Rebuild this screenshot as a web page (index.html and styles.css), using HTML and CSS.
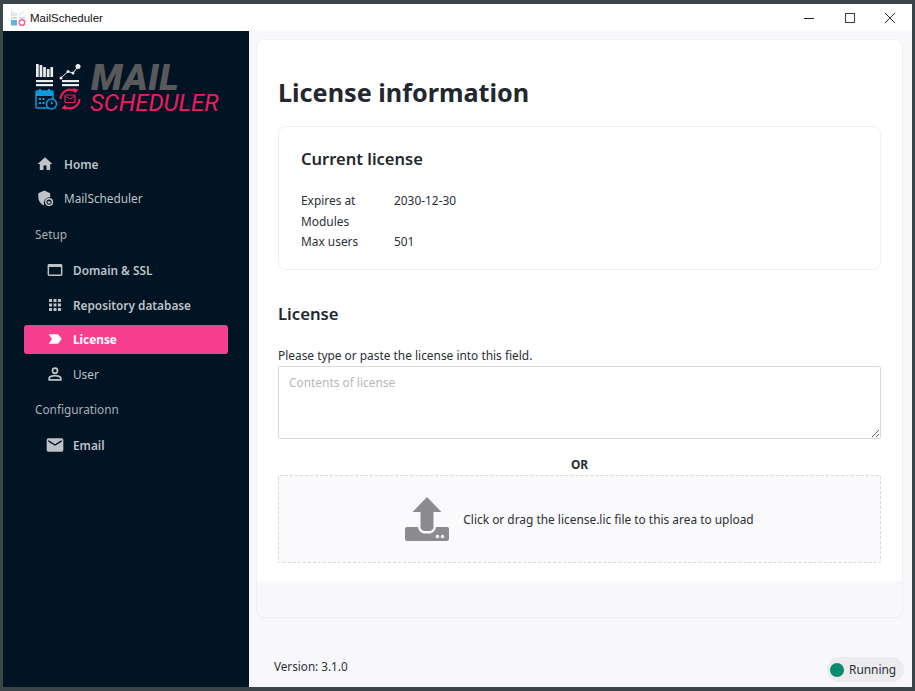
FILE: index.html
```html
<!DOCTYPE html>
<html lang="en">
<head>
<meta charset="utf-8">
<title>MailScheduler</title>
<link rel="stylesheet" href="styles.css">
</head>
<body>
<div class="window">
  <header class="titlebar">
    <svg class="app-icon" width="16" height="16" viewBox="0 0 16 16">
      <rect x="1" y="1" width="1.500" height="5" fill="#d5dbe0"/><rect x="3.200" y="2" width="1.500" height="4" fill="#d5dbe0"/><rect x="5.400" y="3" width="1.500" height="3" fill="#d5dbe0"/>
      <path d="M9 5l3-1.500 2.500-2.500" fill="none" stroke="#d5dbe0"/>
      <rect x="1" y="7" width="6" height="2" fill="#d5dbe0"/><rect x="9" y="7" width="6" height="2" fill="#d5dbe0"/>
      <rect x="1" y="10" width="6" height="5.500" fill="#5cb3e0"/>
      <circle cx="12" cy="12.500" r="2.800" fill="none" stroke="#f0668f" stroke-width="1.500"/>
    </svg>
    <span class="app-name">MailScheduler</span>
    <div class="win-controls">
      <svg class="win-btn" width="14" height="14" viewBox="0 0 14 14"><path d="M2 7.500h10" stroke="#222" fill="none"/></svg>
      <svg class="win-btn" width="14" height="14" viewBox="0 0 14 14"><rect x="2.500" y="2.500" width="9" height="9" stroke="#444" stroke-width="1.100" fill="none"/></svg>
      <svg class="win-btn" width="14" height="14" viewBox="0 0 14 14"><path d="M2 2l10 10M12 2L2 12" stroke="#333" fill="none"/></svg>
    </div>
  </header>
  <div class="app">
    <aside class="sidebar">
      <div class="logo">
        <svg class="logo-icons" width="46" height="46" viewBox="0 0 46 46">
          <g fill="#e9edf0">
            <rect x="1" y="0" width="2.700" height="13"/><rect x="4.600" y="1" width="2.700" height="12"/><rect x="8.200" y="3" width="2.700" height="10"/><rect x="11.800" y="5" width="2.700" height="8"/><rect x="15.400" y="3" width="2.700" height="10"/>
            <rect x="1" y="16" width="17" height="2.200"/><rect x="1" y="20" width="17" height="2.200"/>
            <rect x="27" y="16" width="17" height="2.200"/><rect x="27" y="20" width="17" height="2.200"/>
            <circle cx="26" cy="14" r="1.500"/><circle cx="33" cy="7.500" r="1.500"/><circle cx="38" cy="9" r="1.500"/><circle cx="43" cy="2.500" r="2.500"/>
          </g>
          <path d="M26 14l7-6.500 5 1.500 5-6.500" stroke="#e9edf0" fill="none"/>
          <g fill="none" stroke="#0d9be0" stroke-width="1.500">
            <rect x="1" y="27" width="17" height="17" rx="1"/>
          </g>
          <rect x="1" y="27" width="17" height="5" fill="#0d9be0"/>
          <rect x="4" y="25" width="2" height="3" fill="#0d9be0"/><rect x="13" y="25" width="2" height="3" fill="#0d9be0"/>
          <g fill="#0d9be0"><rect x="4" y="34" width="2" height="2"/><rect x="7.500" y="34" width="2" height="2"/><rect x="4" y="38" width="2" height="2"/><rect x="7.500" y="38" width="2" height="2"/></g>
          <circle cx="16.500" cy="40" r="5" fill="#001424" stroke="#0d9be0" stroke-width="1.500"/>
          <path d="M16.500 37.500V40l1.800-1" fill="none" stroke="#0d9be0"/>
          <g fill="none" stroke="#ed1f5f" stroke-width="2">
            <path d="M25.500 35a9.500 9.500 0 0 1 15-7.500"/><path d="M44.500 35a9.500 9.500 0 0 1-15 7.500"/>
            <rect x="30" y="31" width="10" height="7.500" rx="1" stroke-width="1.200"/><path d="M30.500 32l4.500 3 4.500-3" stroke-width="1"/>
          </g>
          <path d="M38 24l5.500 1.500-3.500 4zM32 46l-5.500-1.500 3.500-4z" fill="#ed1f5f"/>
        </svg>
        <div class="logo-text">
          <div class="logo-mail">MAIL</div>
          <div class="logo-sched">SCHEDULER</div>
        </div>
      </div>
      <nav class="nav">
        <a class="nav-item"><svg class="ic" width="20" height="20" viewBox="-1.500 -1.500 27 27"><path d="M10 20v-6h4v6h5v-8h3L12 3 2 12h3v8z"/></svg>Home</a>
        <a class="nav-item plain"><svg class="ic" width="20" height="20" viewBox="-1.500 -1.500 27 27"><path d="M11 2l8 3.500v5.500a8 8 0 0 0-8 11C6.500 20.500 3 16 3 11V5.500z"/><circle cx="17.500" cy="17.500" r="4.500" fill="none" stroke="#bfc3c7" stroke-width="2"/><rect x="15.500" y="16.500" width="4" height="3"/></svg>MailScheduler</a>
        <div class="nav-label">Setup</div>
        <a class="nav-item sub"><svg class="ic" width="20" height="20" viewBox="-1.500 -1.500 27 27"><path d="M20 4H4a2 2 0 0 0-2 2v12a2 2 0 0 0 2 2h16a2 2 0 0 0 2-2V6a2 2 0 0 0-2-2zm0 14H4V8h16z"/></svg>Domain &amp; SSL</a>
        <a class="nav-item sub"><svg class="ic" width="20" height="20" viewBox="-1.500 -1.500 27 27"><path d="M4 8h4V4H4zm6 12h4v-4h-4zm-6 0h4v-4H4zm0-6h4v-4H4zm6 0h4v-4h-4zm6-10v4h4V4zm-6 4h4V4h-4zm6 6h4v-4h-4zm0 6h4v-4h-4z"/></svg>Repository database</a>
        <a class="nav-item sub active"><svg class="ic" width="20" height="20" viewBox="-1.500 -1.500 27 27"><path d="M3.500 18.500L8 12 3.500 5.500H15c.7 0 1.300.3 1.700.9L21 12l-4.300 5.600c-.4.600-1 .9-1.700.9z"/></svg>License</a>
        <a class="nav-item sub plain"><svg class="ic" width="20" height="20" viewBox="0 0 24 24"><path d="M12 6a2 2 0 1 1 0 4 2 2 0 0 1 0-4m0 9c2.700 0 5.800 1.300 6 2v1H6v-1c.2-.7 3.300-2 6-2M12 4a4 4 0 1 0 0 8 4 4 0 0 0 0-8zm0 9c-2.700 0-8 1.300-8 4v3h16v-3c0-2.700-5.300-4-8-4z"/></svg>User</a>
        <div class="nav-label">Configurationn</div>
        <a class="nav-item sub"><svg class="ic" width="20" height="20" viewBox="0 0 24 24"><path d="M20 4H4a2 2 0 0 0-2 2v12a2 2 0 0 0 2 2h16a2 2 0 0 0 2-2V6a2 2 0 0 0-2-2zm0 4l-8 5-8-5V6l8 5 8-5z"/></svg>Email</a>
      </nav>
    </aside>
    <main class="main">
      <section class="card">
        <div class="card-body">
          <h1 class="title">License information</h1>
          <div class="info-card">
            <h2 class="info-title">Current license</h2>
            <dl class="info-grid">
              <dt>Expires at</dt><dd>2030-12-30</dd>
              <dt>Modules</dt><dd></dd>
              <dt>Max users</dt><dd>501</dd>
            </dl>
          </div>
          <h2 class="section-title">License</h2>
          <label class="field-label" for="lic">Please type or paste the license into this field.</label>
          <textarea class="field" id="lic" placeholder="Contents of license"></textarea>
          <div class="or">OR</div>
          <div class="drop">
            <svg class="drop-icon" width="44" height="44" viewBox="0 0 44 44"><path fill="#8c8c8e" d="M22 0L36.500 15H28.500V31a5 5 0 0 1-5 3H20.500a5 5 0 0 1-5-3V15H7.500z"/><path fill="#8c8c8e" d="M2 30H13c.5 4 3.500 6.500 7 6.500h4c3.500 0 6.500-2.500 7-6.500H42a2 2 0 0 1 2 2v10a2 2 0 0 1-2 2H2a2 2 0 0 1-2-2V32a2 2 0 0 1 2-2z"/><circle cx="32.500" cy="39.500" r="1.700" fill="#fff"/><circle cx="37.500" cy="39.500" r="1.700" fill="#fff"/></svg>
            <span>Click or drag the license.lic file to this area to upload</span>
          </div>
        </div>
        <div class="card-foot"></div>
      </section>
      <footer class="status-bar">
        <span class="version">Version: 3.1.0</span>
        <span class="status"><i class="dot"></i>Running</span>
      </footer>
    </main>
  </div>
</div>
</body>
</html>
```
FILE: styles.css
```css
* { box-sizing: border-box; }
html, body { margin: 0; height: 100%; }
body {
  background: #3b4648;
  padding: 4px 3px;
  font-family: "Noto Sans", sans-serif;
  font-size: 11.9px;
  color: #2a2f36;
  overflow: hidden;
}
.window { height: 683px; display: flex; flex-direction: column; background: #fff; }
.titlebar { height: 27px; flex: none; display: flex; align-items: center; padding-left: 7px; background: #fff; }
.app-icon { margin-right: 4px; }
.app-name { font-family: "Liberation Sans", sans-serif; font-size: 11.5px; color: #111; }
.win-controls { margin-left: auto; display: flex; gap: 26.5px; padding-right: 15px; }
.win-btn { display: block; }
.app { flex: 1; min-height: 0; display: flex; }
.sidebar { width: 246px; flex: none; background: #001424; padding: 32px 21px 0; }
.logo { display: flex; align-items: flex-start; height: 56px; padding-left: 11px; }
.logo-icons { flex: none; margin-right: 10px; margin-top: 1px; }
.logo-text { font-family: "Roboto", sans-serif; font-style: italic; }
.logo-mail { font-weight: 900; font-size: 37px; line-height: 30px; color: #59595c; letter-spacing: .4px; }
.logo-sched { font-weight: 400; font-size: 24px; line-height: 19px; color: #ee1c5f; letter-spacing: -.1px; margin: 1px 0 0 -1px; }
.nav { display: flex; flex-direction: column; margin-top: 30px; }
.nav-item { height: 29px; margin-bottom: 5px; display: flex; align-items: center; gap: 9px; padding-left: 11px; border-radius: 3px; font-size: 11.8px; font-weight: 600; color: #bfc3c7; }
.nav-item.plain { font-weight: 400; }
.nav-item.sub { padding-left: 21px; gap: 8px; margin-bottom: 5.5px; }
.nav-item.sub:has(+ .nav-label) { margin-bottom: 4px; }
.ic { fill: currentColor; flex: none; width: 20px; }
.nav-item.active { background: #f63f8f; color: #fff; font-weight: 700; }
.nav-label { height: 34.5px; display: flex; align-items: center; padding-left: 11px; margin-bottom: 4px; font-size: 11.8px; color: #a9b0b6; }
.main { flex: 1; min-width: 0; background: #f8f8fb; padding: 8px 9px 0 7px; display: flex; flex-direction: column; }
.card { height: 579px; flex: none; border: 1px solid #eeeef3; border-radius: 8px; overflow: hidden; display: flex; flex-direction: column; background: #f8f8fb; }
.card-body { height: 541px; flex: none; background: #fff; padding: 31px 21px 0; }
.title { margin: 0; font-size: 25.2px; line-height: 42px; font-weight: 700; color: #23272e; }
.info-card { margin-top: 13px; height: 144px; border: 1px solid #eeeef3; border-radius: 8px; padding: 19px 22px; }
.info-title { margin: 0; font-size: 16.5px; line-height: 26px; font-weight: 600; color: #23272e; }
.info-grid { margin: 17.5px 0 0; display: grid; grid-template-columns: 93px 1fr; grid-auto-rows: 20.5px; align-items: center; }
.info-grid dt, .info-grid dd { margin: 0; font-size: 11.9px; }
.info-grid dt:nth-of-type(2) { padding-top: 1px; }
.section-title { margin: 31px 0 0; font-size: 16.7px; line-height: 26px; font-weight: 600; color: #23272e; }
.field-label { display: block; margin-top: 19px; font-size: 11.9px; line-height: 18px; }
.field { display: block; width: 100%; height: 73px; margin-top: 2px; padding: 7px 10px; border: 1px solid #d9d9d9; border-radius: 2px; background: #fff; font: 11.9px/17px "Noto Sans", sans-serif; color: #2a2f36; }
.field::placeholder { color: #b7b7b7; }
.or { margin-top: 16px; text-align: center; font-size: 11.9px; line-height: 18px; font-weight: 700; color: #2a2f36; }
.drop { margin-top: 2px; height: 88px; border: 1px dashed #d9d9d9; border-radius: 2px; background: #fafafc; display: flex; align-items: center; justify-content: center; gap: 14px; font-size: 11.9px; }
.drop-icon { flex: none; }
.card-foot { flex: 1; }
.status-bar { flex: 1; display: flex; justify-content: space-between; align-items: flex-start; padding: 39px 0 0 18px; margin-right: -1px; }
.version { font-size: 11.7px; line-height: 18px; }
.status { display: flex; align-items: center; gap: 5px; height: 25px; width: 77px; padding: 0 0 1px 3px; border-radius: 13px; background: #ececee; font-size: 11.9px; }
.dot { width: 14px; height: 14px; border-radius: 50%; background: #0a8a6e; flex: none; margin-top: 1px; }
```
